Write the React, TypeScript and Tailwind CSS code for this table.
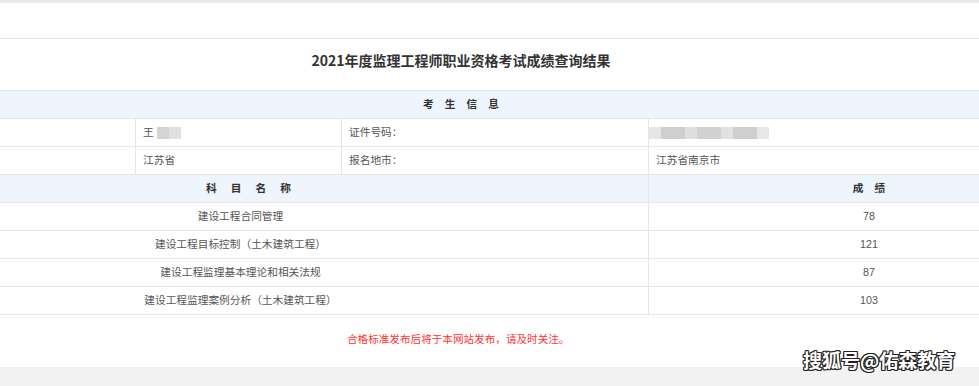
const subjects = [
  { name: '建设工程合同管理', score: '78' },
  { name: '建设工程目标控制（土木建筑工程）', score: '121' },
  { name: '建设工程监理基本理论和相关法规', score: '87' },
  { name: '建设工程监理案例分析（土木建筑工程）', score: '103' },
];

const idBlur = ['#e6e6e6', '#cfcfcf', '#dfdfdf', '#d1d1d1', '#e1e1e1', '#cfcfcf', '#e8e8e8'];
const idWidths = [12, 24, 12, 24, 12, 24, 12];

function Row({ children, blue = false }: { children: React.ReactNode; blue?: boolean }) {
  return (
    <div className={`flex h-[28px] border-b border-[#e6e6e6] ${blue ? 'bg-[#eef5fd]' : 'bg-white'}`}>
      {children}
    </div>
  );
}

export default function App() {
  return (
    <div className="relative w-[979px] h-[386px] overflow-hidden bg-[#f2f2f2] font-['Noto_Sans_CJK_SC',sans-serif] text-[10.7px] text-[#555]">
      <div className="h-[3px] bg-[#e6e9ed]" />
      <div className="bg-white h-[364px]">
        <div className="h-[36px] border-b border-[#e8e8e8]" />

        <div className="w-[1256px] -ml-[167px]">
          <div className="h-[52px] flex items-center justify-center pb-[9px] border-b border-[#e6e6e6] text-[14px] font-bold text-[#333]">
            2021年度监理工程师职业资格考试成绩查询结果
          </div>

          <Row blue>
            <div className="flex-1 flex items-center justify-center font-bold text-[#333] tracking-[11px] pl-[11px]">
              考生信息
            </div>
          </Row>

          <Row>
            <div className="w-[303px] border-r border-[#e6e6e6]" />
            <div className="w-[206px] border-r border-[#e6e6e6] flex items-center pl-[7px]">
              <span>王</span>
              <div className="flex ml-[3px] blur-[0.6px]">
                <div className="w-[12px] h-[12px] bg-[#d4d4d4]" />
                <div className="w-[12px] h-[12px] bg-[#e0e0e0]" />
              </div>
            </div>
            <div className="w-[307px] border-r border-[#e6e6e6] flex items-center pl-[7px]">证件号码：</div>
            <div className="flex-1 flex items-center">
              <div className="flex blur-[0.6px]">
                {idBlur.map((c, i) => (
                  <div key={i} className="h-[12px]" style={{ width: idWidths[i], background: c }} />
                ))}
              </div>
            </div>
          </Row>

          <Row>
            <div className="w-[303px] border-r border-[#e6e6e6]" />
            <div className="w-[206px] border-r border-[#e6e6e6] flex items-center pl-[7px]">江苏省</div>
            <div className="w-[307px] border-r border-[#e6e6e6] flex items-center pl-[7px]">报名地市：</div>
            <div className="flex-1 flex items-center pl-[7px]">江苏省南京市</div>
          </Row>

          <Row blue>
            <div className="w-[816px] border-r border-[#e6e6e6] flex items-center justify-center font-bold text-[#333] tracking-[14px] pl-[30px]">
              科目名称
            </div>
            <div className="flex-1 flex items-center justify-center font-bold text-[#333] tracking-[11px] pl-[11px]">
              成绩
            </div>
          </Row>

          {subjects.map((s) => (
            <Row key={s.name}>
              <div className="w-[816px] border-r border-[#e6e6e6] flex items-center justify-center">{s.name}</div>
              <div className="flex-1 flex items-center justify-center font-['Liberation_Sans',sans-serif]">
                {s.score}
              </div>
            </Row>
          ))}
        </div>

        <div className="pt-[16px] pl-[347px] text-[#f33] text-[10.6px] leading-[16px]">
          合格标准发布后将于本网站发布，请及时关注。
        </div>
      </div>

      <div className="absolute left-[803px] top-[345px] leading-[30px] text-[19px] font-bold text-white [text-shadow:1px_1px_0_#222,-1px_-1px_0_#222,1px_-1px_0_#222,-1px_1px_0_#222,0_1px_0_#222,0_-1px_0_#222,1px_0_0_#222,-1px_0_0_#222]">
        搜狐号@佑森教育
      </div>
    </div>
  );
}
